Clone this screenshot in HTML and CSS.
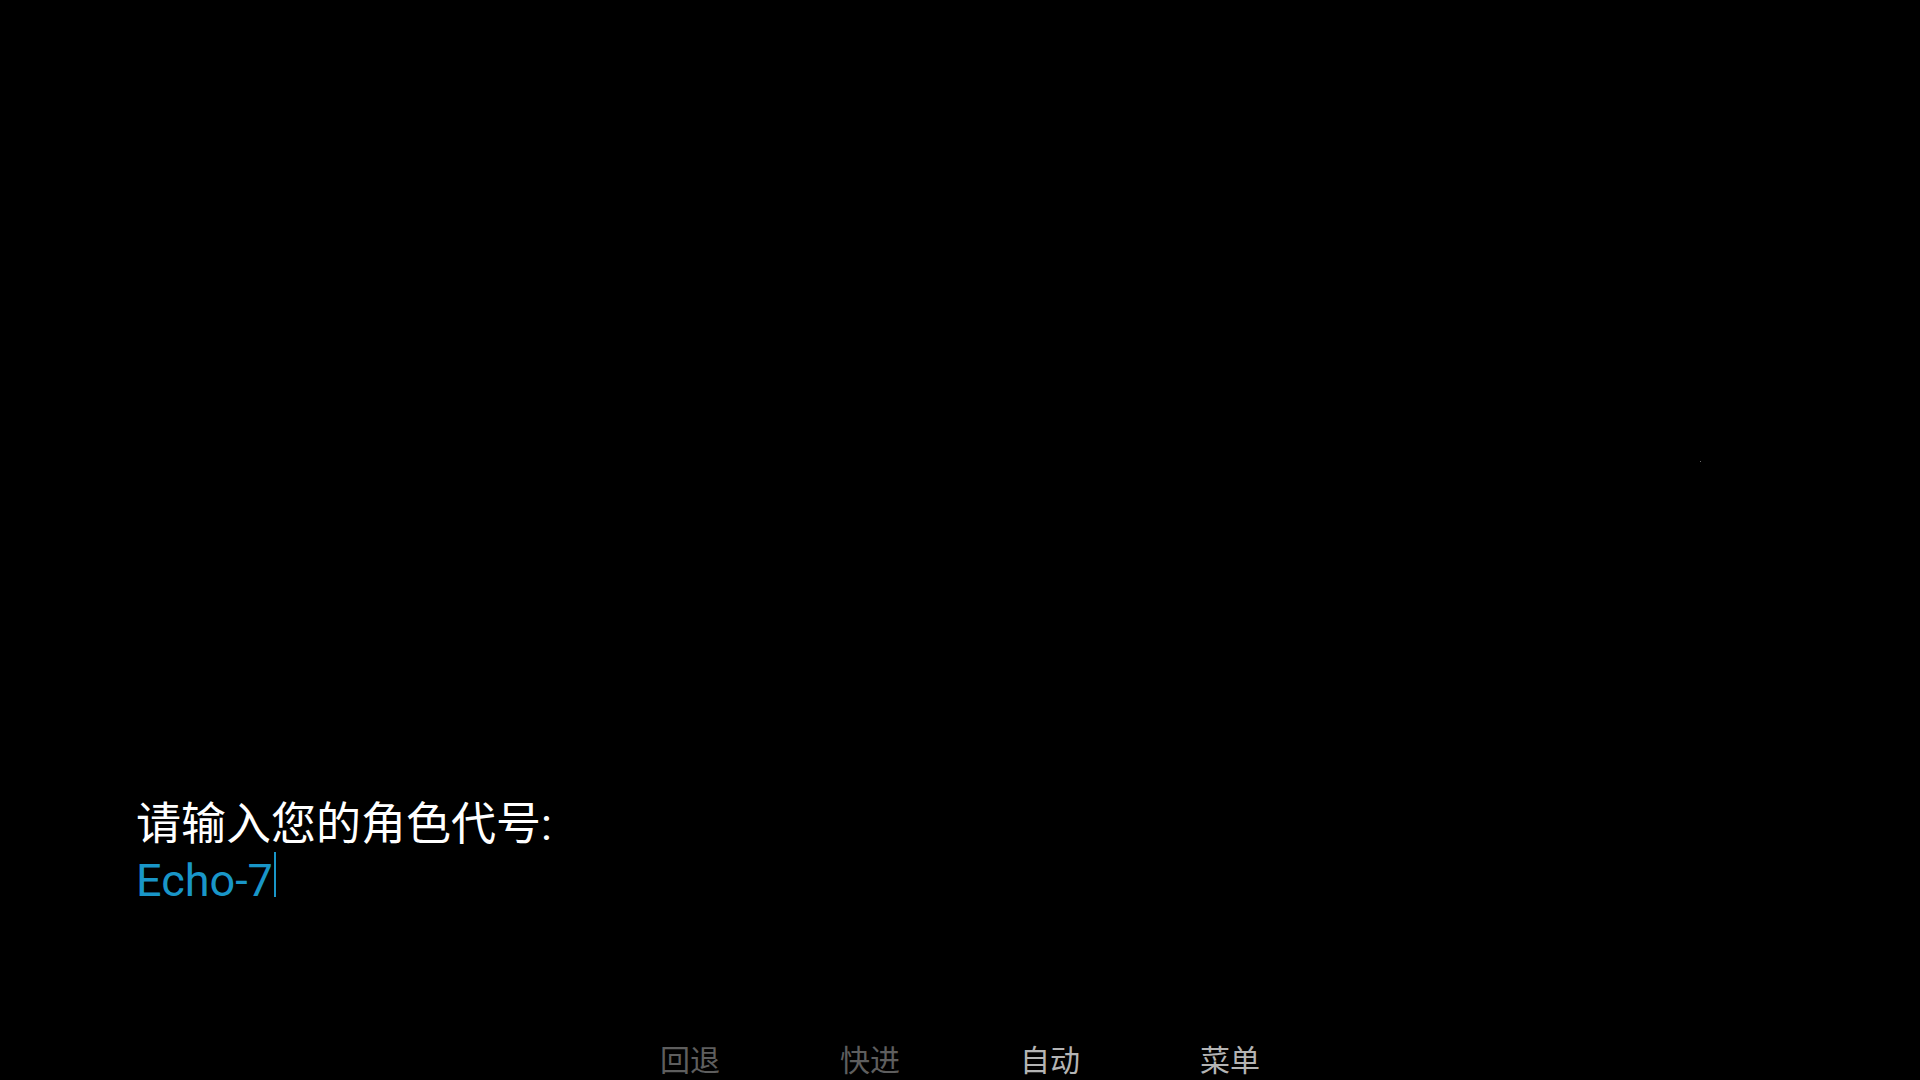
FILE: index.html
```html
<!DOCTYPE html>
<html lang="zh-CN">
<head>
<meta charset="utf-8">
<title>角色代号</title>
<link rel="stylesheet" href="styles.css">
</head>
<body>
<main class="screen">
  <span class="speck"></span>
  <section class="dialog">
    <p class="prompt">请输入您的角色代号:</p>
    <p class="entry">Echo-7<span class="caret"></span></p>
  </section>
  <nav class="menu">
    <span class="menu-item is-disabled">回退</span>
    <span class="menu-item is-disabled">快进</span>
    <span class="menu-item">自动</span>
    <span class="menu-item">菜单</span>
  </nav>
</main>
</body>
</html>
```

FILE: styles.css
```css
html, body {
  margin: 0;
  padding: 0;
  background: #000;
}

body {
  width: 1920px;
  height: 1080px;
  overflow: hidden;
  font-family: Roboto, "Noto Sans CJK SC", sans-serif;
}

.screen {
  position: relative;
  height: 1080px;
  display: flex;
  flex-direction: column;
  justify-content: flex-end;
}

.speck {
  position: absolute;
  left: 1700px;
  top: 461px;
  width: 1px;
  height: 1px;
  background: #6a6a6a;
}

.dialog {
  padding-left: 136px;
  margin-bottom: 135px;
  font-size: 45px;
  line-height: 55px;
}

.prompt,
.entry {
  margin: 0;
}

.prompt {
  color: #ffffff;
}

.entry {
  color: #1996c8;
}

.caret {
  display: inline-block;
  width: 2px;
  height: 45px;
  margin-left: 1px;
  background: #1996c8;
  vertical-align: -1px;
}

.menu {
  display: flex;
  justify-content: center;
  gap: 120px;
  padding-bottom: 7px;
  font-family: "Noto Sans CJK SC", sans-serif;
  font-size: 30px;
  line-height: 30px;
}

.menu-item {
  width: 60px;
  text-align: center;
  color: #b4b4b4;
}

.menu-item.is-disabled {
  color: #5e5e5e;
}
```
